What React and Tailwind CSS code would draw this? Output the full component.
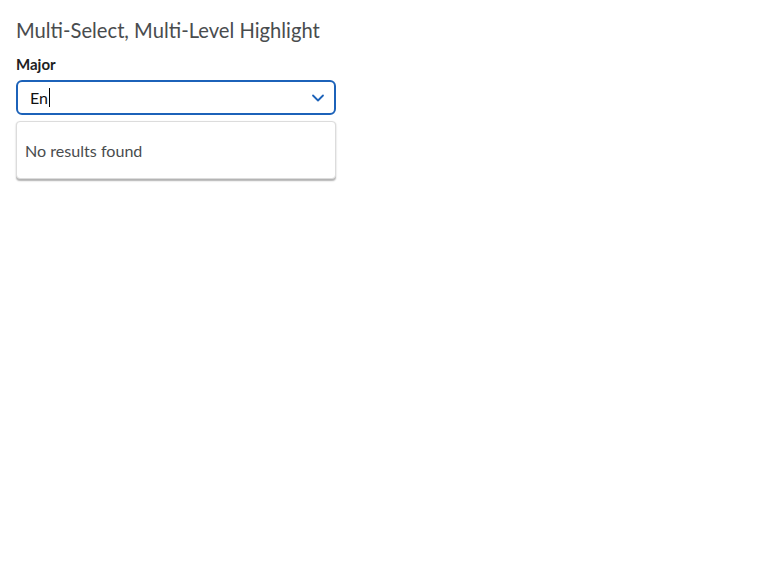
export default function App() {
  return (
    <div className="min-h-screen bg-white px-4 pt-[17px]" style={{ fontFamily: "Lato, 'Noto Sans', sans-serif" }}>
      <h1 className="text-[20.2px] leading-[26px] text-[#494c4e] font-normal">Multi-Select, Multi-Level Highlight</h1>
      <div className="mt-[11px] text-[15px] leading-5 font-bold text-[#202122]">Major</div>
      <div className="mt-[6px] w-[320px]">
        <div className="flex h-[35px] items-center rounded-md border-2 border-[#1c62b9] pl-[12px] pr-[9px]">
          <span className="text-[16px] text-[#111] leading-5">En</span>
          <span className="ml-px h-[19px] w-px bg-black" />
          <div className="flex-1" />
          <svg width="14" height="14" viewBox="0 0 14 14" fill="none" stroke="#1c62b9" strokeWidth="1.8" strokeLinecap="round" strokeLinejoin="round">
            <path d="M2 4.5 L7 9.5 L12 4.5" />
          </svg>
        </div>
        <div className="mt-[6px] h-[58px] rounded-[4px] border border-[#dcdcdc] bg-white shadow-[0_1.5px_1.5px_rgba(0,0,0,0.3)] flex items-center pl-2 pt-[3px]">
          <span className="text-[16.1px] text-[#494c4e]">No results found</span>
        </div>
      </div>
    </div>
  );
}
